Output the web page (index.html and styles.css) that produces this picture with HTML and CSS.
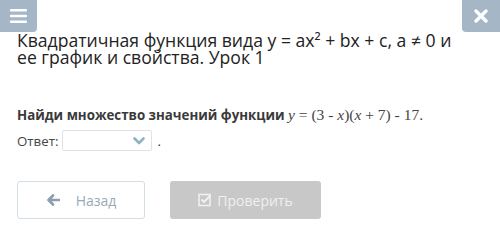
FILE: index.html
```html
<!DOCTYPE html>
<html>
<head>
<meta charset="utf-8">
<link rel="stylesheet" href="styles.css">
</head>
<body>
<div class="topbar">
  <div class="menu-btn">
    <svg width="17" height="14" viewBox="0 0 17 14"><rect x="0" y="0" width="17" height="2.6" rx="1" fill="#fff"/><rect x="0" y="5.7" width="17" height="2.6" rx="1" fill="#fff"/><rect x="0" y="11.4" width="17" height="2.6" rx="1" fill="#fff"/></svg>
  </div>
  <div class="close-btn">
    <svg width="14" height="14" viewBox="0 0 14 14"><path d="M2 2 L12 12 M12 2 L2 12" stroke="#fff" stroke-width="3.4" stroke-linecap="round"/></svg>
  </div>
</div>
<div class="content">
  <h1 class="title">Квадратичная функция вида y = ax² + bx + c, a ≠ 0 и ее график и свойства. Урок 1</h1>
  <p class="question"><b>Найди множество значений функции</b> <span class="math"><i>y</i> = (3 - <i>x</i>)(<i>x</i> + 7) - 17.</span></p>
  <div class="answer">
    <span class="label">Ответ:</span>
    <span class="select"><svg width="12" height="8" viewBox="0 0 12 8"><path d="M1.5 1.5 L6 6 L10.5 1.5" stroke="#8fb3c3" stroke-width="2.6" fill="none" stroke-linecap="round" stroke-linejoin="round"/></svg></span>
    <span class="dot">.</span>
  </div>
  <div class="buttons">
    <div class="btn back">
      <svg width="14" height="12" viewBox="0 0 14 12"><path d="M13 6 H3 M7 1.5 L2.5 6 L7 10.5" stroke="#8c9db0" stroke-width="2.6" fill="none" stroke-linecap="round" stroke-linejoin="round"/></svg>
      <span>Назад</span>
    </div>
    <div class="btn check">
      <svg width="14" height="14" viewBox="0 0 14 14"><rect x="1" y="1.5" width="11" height="11" fill="none" stroke="#f2f2f2" stroke-width="1.5"/><path d="M3.5 6.5 L6 9 L12.5 2.5" stroke="#f2f2f2" stroke-width="1.8" fill="none"/></svg>
      <span>Проверить</span>
    </div>
  </div>
</div>
</body>
</html>
```
FILE: styles.css
```css
html, body { margin: 0; padding: 0; background: #fff; }
body { font-family: "Open Sans", "Noto Sans", sans-serif; color: #333; width: 500px; height: 250px; overflow: hidden; }
.topbar { display: flex; justify-content: space-between; height: 0; }
.menu-btn { width: 37px; height: 32px; background: #a5b6c6; border-bottom-right-radius: 4px; display: flex; align-items: center; justify-content: center; flex: none; }
.close-btn { width: 38px; height: 32px; background: #a5b6c6; border-bottom-left-radius: 4px; display: flex; align-items: center; justify-content: center; flex: none; }
.content { padding: 32px 0 0 17px; }
.title { font-size: 17.6px; font-weight: 400; line-height: 17px; margin: 0; color: #222; width: 455px; }
.question { margin: 40px 0 0 0; font-size: 13.3px; line-height: 18px; color: #333; }
.question b { font-weight: 700; color: #3a3a3a; }
.math { font-family: "Liberation Serif", "DejaVu Serif", serif; font-size: 15.5px; color: #444; }
.answer { display: flex; align-items: center; margin-top: 6px; font-size: 13.3px; }
.label { color: #444; }
.select { width: 82px; height: 19px; border: 1px solid #dde3e8; border-radius: 2px; margin-left: 4px; display: flex; align-items: center; justify-content: flex-end; padding-right: 6px; box-sizing: content-box; }
.dot { margin-left: 5px; }
.buttons { display: flex; gap: 25px; margin-top: 30px; }
.btn { height: 38px; border-radius: 3px; display: flex; align-items: center; justify-content: center; font-size: 14px; box-sizing: border-box; }
.back { width: 128px; border: 1px solid #d5dde4; color: #9aa9b8; gap: 16px; }
.check { width: 151px; background: #c8c8c8; color: #f0f0f0; gap: 5px; }
```
